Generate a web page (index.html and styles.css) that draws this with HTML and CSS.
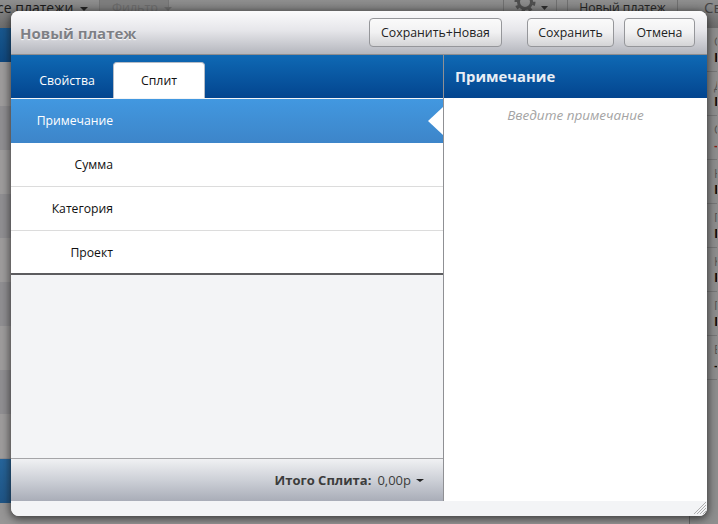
FILE: index.html
```html
<!DOCTYPE html>
<html lang="ru">
<head>
<meta charset="utf-8">
<title>Новый платеж</title>
<link rel="stylesheet" href="styles.css">
</head>
<body>
<div class="page">
  <div class="topbar">
    <div class="crumb">се платежи <span class="caret dark"></span></div>
    <div class="filter">Фильтр <span class="caret light"></span></div>
    <div class="spacer"></div>
    <div class="gear">
      <svg width="52" height="14" viewBox="0 0 52 14"><circle cx="21" cy="2" r="6.500" fill="none" stroke="#4e4e4e" stroke-width="3"/><circle cx="21" cy="2" r="9" fill="none" stroke="#4e4e4e" stroke-width="3" stroke-dasharray="3.500 3.500"/><path d="M37 6h7l-3.500 4z" fill="#2c2c2c"/></svg>
    </div>
    <div class="newpay">Новый платеж</div>
    <div class="sv">Св</div>
  </div>
  <div class="bgmain">
    <div class="bgleft">
      <div class="bgblue one"></div>
      <div class="bgstripes"></div>
      <div class="bgblue two"></div>
    </div>
    <div class="bgright">
      <div class="prop"><span>С</span><b>Н</b></div>
      <div class="prop"><span>Д</span><b>П</b></div>
      <div class="prop"><span>С</span><b class="red">–</b></div>
      <div class="prop"><span>Н</span><b>В</b></div>
      <div class="prop"><span>П</span><b>П</b></div>
      <div class="prop"><span>К</span><b>Р</b></div>
      <div class="prop"><span>П</span><b>П</b></div>
      <div class="prop"><span>В</span><b>–</b></div>
    </div>
  </div>
</div>

<div class="modal">
  <header class="mhead">
    <h1 class="mtitle">Новый платеж</h1>
    <div class="mactions">
      <button class="btn wide">Сохранить+Новая</button>
      <button class="btn save">Сохранить</button>
      <button class="btn cancel">Отмена</button>
    </div>
  </header>
  <div class="mbody">
    <section class="left">
      <div class="tabs">
        <div class="tab">Свойства</div>
        <div class="tab active">Сплит</div>
      </div>
      <div class="rows">
        <div class="row selected"><span class="rlabel first">Примечание</span></div>
        <div class="row"><span class="rlabel">Сумма</span></div>
        <div class="row"><span class="rlabel">Категория</span></div>
        <div class="row last"><span class="rlabel">Проект</span></div>
      </div>
      <div class="fill"></div>
      <div class="total"><b>Итого Сплита:</b><span class="amount">0,00р</span><span class="caret dark small"></span></div>
    </section>
    <section class="right">
      <div class="rhead">Примечание</div>
      <div class="note">Введите примечание</div>
    </section>
  </div>
  <div class="mfoot">
    <svg class="grip" width="14" height="14" viewBox="0 0 14 14"><path d="M13 1L1 13M13 4L4 13M13 7L7 13M13 10L10 13" stroke="#8c8c8c" stroke-width="1" stroke-dasharray="1 .4" fill="none"/></svg>
  </div>
</div>
</body>
</html>
```
FILE: styles.css
```css
* { box-sizing: border-box; }
html, body { margin: 0; padding: 0; width: 718px; height: 524px; overflow: hidden; }
body { font-family: "Open Sans", "Liberation Sans", sans-serif; background: #8e8e8e; position: relative; }

.page { width: 718px; height: 524px; display: flex; flex-direction: column; overflow: hidden; }
.topbar { height: 28px; flex: none; display: flex; background: linear-gradient(#8e8e8e, #6c6c6c); font-size: 14px; color: #1a1a1a; line-height: 14px; }
.crumb { width: 102px; margin-left: -3px; padding-top: 1px; white-space: nowrap; }
.filter { width: 70px; height: 14px; background: #7d7d7d; color: #6b6b6b; padding: 1px 0 0 12px; border: solid #747474; border-width: 0 1px; white-space: nowrap; font-size: 12.500px; line-height: 14px; }
.spacer { flex: 1; }
.gear { width: 54px; height: 14px; border-left: 1px solid #6f6f6f; border-right: 1px solid #6f6f6f; overflow: hidden; }
.gear svg { display: block; }
.newpay { margin-left: 10px; width: 111px; height: 14px; padding-top: 1px; text-align: center; border: solid #6f6f6f; border-width: 0 1px; white-space: nowrap; font-size: 12.200px; color: #222; line-height: 14px; }
.sv { margin-left: 26px; width: 14px; font-size: 15px; color: #444; line-height: 14px; white-space: nowrap; overflow: hidden; }

.bgmain { flex: 1; display: flex; min-height: 0; }
.bgleft { width: 690px; display: flex; flex-direction: column; background: #979696; }
.bgblue { flex: none; }
.bgblue.one { height: 34px; background: linear-gradient(#19588f, #0e4880); }
.bgstripes { height: 397px; flex: none; background: repeating-linear-gradient(#9e9c9c 0 44px, #908f92 44px 88px); }
.bgblue.two { height: 44px; background: linear-gradient(#26659b, #1f5586); }
.bgright { width: 28px; background: #8e8e8e; border-left: 1px solid #666; margin-left: -1px; display: flex; flex-direction: column; padding-left: 24px; }
.prop { height: 44px; flex: none; border-bottom: 1px solid #777; margin-left: -24px; padding-left: 24px; display: flex; flex-direction: column; font-size: 12px; color: #555; line-height: 15px; padding-top: 6px; white-space: nowrap; overflow: hidden; }
.prop b { color: #111; font-size: 13px; line-height: 17px; }
.prop b.red { color: #8a2020; }

.caret { display: inline-block; width: 0; height: 0; border-style: solid; border-width: 4px 4px 0; border-color: #222 transparent transparent; vertical-align: middle; margin-left: 3px; }
.caret.light { border-top-color: #6a6a6a; }

.modal { position: absolute; left: 11px; top: 11px; width: 696px; height: 505px; background: #f4f5f7; border-radius: 8px; display: flex; flex-direction: column; overflow: hidden; box-shadow: 0 2px 8px 1px rgba(20,20,20,.7); }
.mhead { height: 44px; flex: none; display: flex; align-items: center; justify-content: space-between; padding: 0 12px 0 9px; background: linear-gradient(#fbfbfc, #e6e6ea 45%, #b4b6bd); border-bottom: 1px solid #8d8d8f; }
.mtitle { margin: 0; font-family: "Open Sans", sans-serif; font-size: 15px; font-weight: 700; color: #7e8085; text-shadow: 0 1px 1px #fff; }
.mactions { display: flex; margin-top: -1px; }
.btn { font-family: "Open Sans", sans-serif; font-size: 12.300px; height: 29px; padding: 0; background: linear-gradient(#fafafa, #f1f1f2 50%, #d4d4d6); border: 1px solid #95969a; border-radius: 4px; color: #222; }
.btn.wide { width: 133px; }
.btn.save { width: 87px; margin-left: 25px; }
.btn.cancel { width: 71px; margin-left: 10px; }

.mbody { height: 446px; flex: none; display: flex; }
.left { width: 433px; flex: none; display: flex; flex-direction: column; border-right: 1px solid #8f9094; background: #f3f4f6; }
.tabs { height: 43px; flex: none; display: flex; align-items: flex-end; background: linear-gradient(#0f69b4, #03458f); }
.tab { width: 102px; height: 35px; padding-left: 10px; padding-bottom: 1px; display: flex; align-items: center; justify-content: center; font-size: 12.300px; color: #fff; }
.tab.active { width: 92px; height: 36px; padding: 0 0 1px; background: #fff; color: #111; border-radius: 4px 4px 0 0; border: 1px solid #b6bcc6; border-bottom: 0; }
.rows { flex: none; margin-top: 1px; border-bottom: 2px solid #5c5c5f; background: #fff; }
.row { height: 44px; display: flex; align-items: center; border-bottom: 1px solid #dcdcdc; font-size: 12.200px; color: #111; position: relative; }
.row.last { border-bottom: 0; height: 42px; }
.row.last .rlabel { padding: 1px 0 0; }
.row.selected { background: linear-gradient(#4298e0, #3d85c9); color: #fff; border-bottom: 0; }
.row.selected::after { content: ""; position: absolute; right: 0; top: 8px; border-style: solid; border-width: 14px 15px 14px 0; border-color: transparent #fff transparent transparent; }
.rlabel { width: 102px; text-align: right; white-space: nowrap; padding-bottom: 1px; }
.fill { flex: 1; background: #f3f4f6; }
.total { height: 43px; flex: none; display: flex; align-items: center; justify-content: flex-end; padding-right: 19px; background: linear-gradient(#f0f1f3, #cdd0d7 50%, #a9adb8); border-top: 1px solid #a5a5a8; font-size: 13px; color: #3c3c3c; }
.total b { font-weight: 700; font-family: "Open Sans", sans-serif; }
.amount { margin-left: 6px; }
.total .caret { margin-left: 5px; border-width: 3.500px 4px 0; }

.right { flex: 1; background: #fff; display: flex; flex-direction: column; min-width: 0; }
.rhead { height: 43px; flex: none; display: flex; align-items: center; padding: 0 0 2px 11px; background: linear-gradient(#0f69b4, #03458f); color: #e9eef5; font-family: "Open Sans", sans-serif; font-weight: 700; font-size: 14.800px; }
.note { text-align: center; font-style: italic; font-size: 13.500px; color: #a4a4a4; padding-top: 8px; }

.mfoot { flex: 1; background: #f3f4f6; position: relative; }
.grip { position: absolute; right: 0; bottom: 1px; }
```
